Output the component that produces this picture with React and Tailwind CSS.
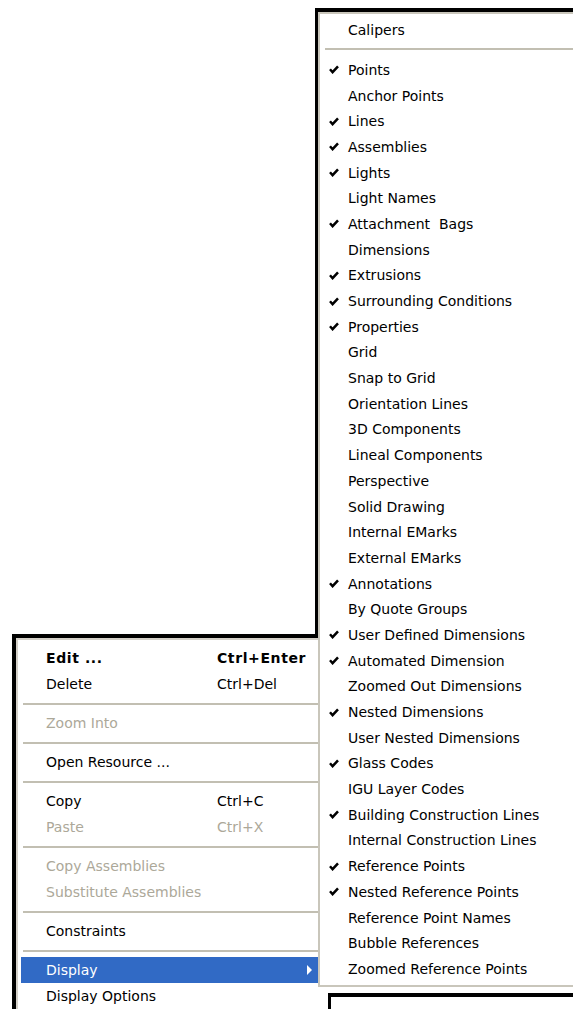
import React from 'react'

const subItems = [
  ['Points', true],
  ['Anchor Points', false],
  ['Lines', true],
  ['Assemblies', true],
  ['Lights', true],
  ['Light Names', false],
  ['Attachment  Bags', true],
  ['Dimensions', false],
  ['Extrusions', true],
  ['Surrounding Conditions', true],
  ['Properties', true],
  ['Grid', false],
  ['Snap to Grid', false],
  ['Orientation Lines', false],
  ['3D Components', false],
  ['Lineal Components', false],
  ['Perspective', false],
  ['Solid Drawing', false],
  ['Internal EMarks', false],
  ['External EMarks', false],
  ['Annotations', true],
  ['By Quote Groups', false],
  ['User Defined Dimensions', true],
  ['Automated Dimension', true],
  ['Zoomed Out Dimensions', false],
  ['Nested Dimensions', true],
  ['User Nested Dimensions', false],
  ['Glass Codes', true],
  ['IGU Layer Codes', false],
  ['Building Construction Lines', true],
  ['Internal Construction Lines', false],
  ['Reference Points', true],
  ['Nested Reference Points', true],
  ['Reference Point Names', false],
  ['Bubble References', false],
  ['Zoomed Reference Points', false],
]

// left menu: null = separator
const mainItems = [
  { label: 'Edit ...', key: 'Ctrl+Enter', bold: true },
  { label: 'Delete', key: 'Ctrl+Del' },
  null,
  { label: 'Zoom Into', disabled: true },
  null,
  { label: 'Open Resource ...' },
  null,
  { label: 'Copy', key: 'Ctrl+C' },
  { label: 'Paste', key: 'Ctrl+X', disabled: true },
  null,
  { label: 'Copy Assemblies', disabled: true },
  { label: 'Substitute Assemblies', disabled: true },
  null,
  { label: 'Constraints' },
  null,
  { label: 'Display', active: true, sub: true },
  { label: 'Display Options' },
]

const Check = () => (
  <svg width="10" height="9" viewBox="0 0 10 9" className="shrink-0">
    <polyline points="1,4.2 3.6,7.2 9,1.4" fill="none" stroke="#000" strokeWidth="2.5" strokeLinejoin="miter" />
  </svg>
)

const Separator = () => (
  <div className="h-[13px] flex items-center pl-[2px]">
    <div className="h-[2px] w-full bg-[#c2bfb2]" />
  </div>
)

const MainRow = ({ item }) => {
  const color = item.active ? 'text-white' : item.disabled ? 'text-[#aca899]' : 'text-black'
  return (
    <div className={`h-[26px] flex items-center pl-[25px] whitespace-pre ${item.active ? 'bg-[#316ac5]' : ''} ${color} ${item.bold ? 'font-bold tracking-[0.6px]' : ''}`}>
      <span className="w-[171px] shrink-0">{item.label}</span>
      {item.key && <span>{item.key}</span>}
      {item.sub && (
        <svg width="6" height="10" viewBox="0 0 6 10" className="ml-auto mr-[5px]">
          <polygon points="0,0 5,5 0,10" fill="#fff" />
        </svg>
      )}
    </div>
  )
}

export default function App() {
  return (
    <div className="w-[573px] h-[1009px] bg-white overflow-hidden flex items-start text-[14px] leading-none" style={{ fontFamily: '"DejaVu Sans", "Liberation Sans", sans-serif' }}>
      {/* left column with the context menu */}
      <div className="w-[315px] shrink-0 flex flex-col pt-[634px]">
        <div className="relative z-10 ml-[12px] w-[306px] bg-white border-t-4 border-l-4 border-black">
          <div className="border-t-2 border-l-2 border-[#d4d0c8] pt-[5px] pl-[3px] pb-[20px]">
            {mainItems.map((it, i) => (it ? <MainRow key={i} item={it} /> : <Separator key={i} />))}
          </div>
        </div>
      </div>

      {/* submenu + window underneath */}
      <div className="flex-1 flex flex-col pt-[8px]">
        <div className="w-[300px] bg-white border-t-4 border-l-[3px] border-black">
          <div className="border-t-2 border-l-2 border-b-2 border-[#c9c6bb] pt-[3px] pb-[3px]">
            <div className="h-[25.7px] flex items-center pl-[28px] text-black">Calipers</div>
            <div className="h-[14.3px] pt-[5px] pl-[5px]">
              <div className="h-[2px] w-full bg-[#c2bfb2]" />
            </div>
            {subItems.map(([label, checked]) => (
              <div key={label} className="h-[25.7px] flex items-center text-black whitespace-pre">
                <div className="w-[28px] shrink-0 pl-[9px] flex items-center">{checked && <Check />}</div>
                <span>{label}</span>
              </div>
            ))}
          </div>
        </div>
        <div className="mt-[6px] ml-[13px] h-[40px] border-t-4 border-l-[3px] border-black bg-white" />
      </div>
    </div>
  )
}
